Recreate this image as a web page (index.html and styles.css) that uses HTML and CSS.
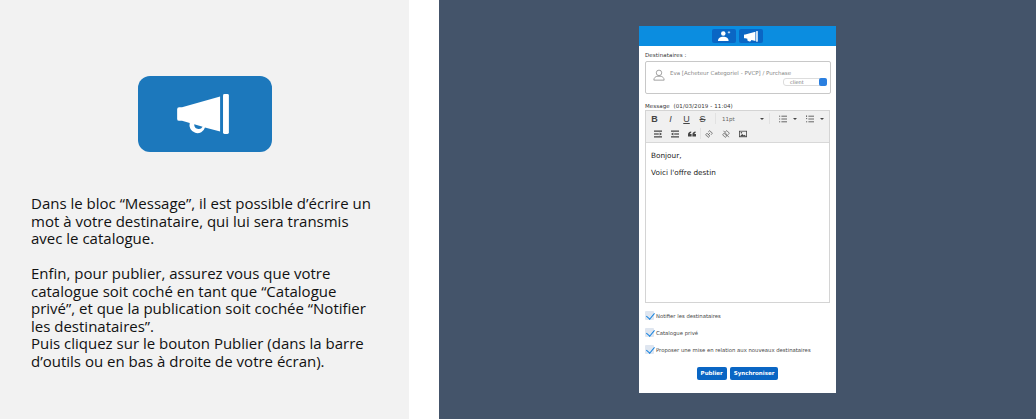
FILE: index.html
```html
<!DOCTYPE html>
<html lang="fr">
<head>
<meta charset="utf-8">
<title>Publier</title>
<link rel="stylesheet" href="styles.css">
</head>
<body>
<div class="slide">
  <section class="info">
    <div class="badge">
      <svg class="badge-icon" viewBox="0 0 54 42"><path d="M0 15.500a2 2 0 0 1 2-2h3L44 2.500v36L28.500 34.200a8 8 0 0 1-15.600-4.400L5 27.500H2a2 2 0 0 1-2-2z M17.500 31a4.600 4.600 0 0 0 8.600 2.500z" fill="#fff" fill-rule="evenodd"/><rect x="47" y="0" width="6" height="41" rx="1.500" fill="#fff"/></svg>
    </div>
    <div class="copy">
      <p>Dans le bloc “Message”, il est possible d’écrire un mot à votre destinataire, qui lui sera transmis avec le catalogue.</p>
      <p>Enfin, pour publier, assurez vous que votre catalogue soit coché en tant que “Catalogue privé”, et que la publication soit cochée “Notifier les destinataires”.<br>Puis cliquez sur le bouton Publier (dans la barre d’outils ou en bas à droite de votre écran).</p>
    </div>
  </section>
  <section class="stage">
    <div class="phone">
      <div class="tabs">
        <span class="tab"><svg class="tab-user" viewBox="0 0 16 12"><circle cx="6.500" cy="3" r="2.800" fill="#fff"/><path d="M0 12c0-3.500 3-5 6.500-5s6.500 1.500 6.500 5z" fill="#fff"/><path d="M13.500 0v3M12 1.500h3" stroke="#fff" stroke-width=".8"/></svg></span>
        <span class="tab"><svg class="tab-horn" viewBox="0 0 54 42"><path d="M0 15.500a2 2 0 0 1 2-2h3L44 2.500v36L28.500 34.200a8 8 0 0 1-15.600-4.400L5 27.500H2a2 2 0 0 1-2-2z" fill="#fff"/><rect x="47" y="0" width="6" height="41" rx="1.500" fill="#fff"/></svg></span>
      </div>
      <div class="form">
        <div class="label">Destinataires :</div>
        <div class="recipient">
          <svg class="avatar" viewBox="0 0 14 14"><circle cx="7" cy="4.500" r="3.200" fill="none" stroke="#888" stroke-width=".9"/><path d="M1 13c0-3 2-4 3.500-4.500h5C11 9 13 10 13 13z" fill="none" stroke="#888" stroke-width=".9"/></svg>
          <div class="recipient-name">Eva [Acheteur Categoriel - PVCP] / Purchase</div>
          <div class="select"><span class="select-text">client</span><span class="select-arrows"></span></div>
        </div>
        <div class="label label-msg">Message&nbsp; (01/03/2019 - 11:04)</div>
        <div class="editor">
          <div class="toolbar">
            <div class="tool-row">
              <span class="t b">B</span><span class="t i">I</span><span class="t u">U</span><span class="t s">S</span>
              <span class="sep"></span>
              <span class="size">11pt</span><span class="caret caret-size"></span>
              <span class="sep"></span>
              <svg class="ti" viewBox="0 0 10 10"><path d="M3 1.500h7M3 5h7M3 8.500h7M0 1.500h1.500M0 5h1.500M0 8.500h1.500" stroke="#444" stroke-width="1"/></svg><span class="caret"></span>
              <svg class="ti" viewBox="0 0 10 10"><path d="M3 1.500h7M3 5h7M3 8.500h7M.7 .5v2M0 4.500h1.500M0 8.500h1.500" stroke="#444" stroke-width="1"/></svg><span class="caret"></span>
            </div>
            <div class="tool-row tool-row-2">
              <svg class="ti" viewBox="0 0 10 10"><path d="M0 1.500h10M0 8.500h10" stroke="#444" stroke-width="1.500"/><path d="M0 5h6" stroke="#444" stroke-width="1.500"/><path d="M7 3l3 2-3 2z" fill="#444"/></svg>
              <svg class="ti" viewBox="0 0 10 10"><path d="M0 1.500h10M0 8.500h10" stroke="#444" stroke-width="1.500"/><path d="M4 5h6" stroke="#444" stroke-width="1.500"/><path d="M3 3L0 5l3 2z" fill="#444"/></svg>
              <svg class="ti" viewBox="0 0 10 10"><path d="M0 8V5.500C0 3.500 1.500 2.300 4 2v1.500C3 3.700 2.500 4.200 2.500 5H4.500v3zM5.500 8V5.500C5.500 3.500 7 2.300 9.500 2v1.500C8.500 3.700 8 4.200 8 5h2v3z" fill="#444"/></svg>
              <span class="sep sep-tight"></span>
              <svg class="ti" viewBox="0 0 10 10"><path d="M3.500 6.500l3-3M4 2.500L6 .8 9.200 4 7.500 6M.8 6 2.500 4 6 7.500 4 9.200z" fill="none" stroke="#555" stroke-width=".9"/></svg>
              <svg class="ti" viewBox="0 0 10 10"><path d="M4 2.500L6 .8 9.200 4 7.500 6M.8 6 2.500 4 6 7.500 4 9.200zM2 1l6.500 8" fill="none" stroke="#555" stroke-width=".9"/></svg>
              <svg class="ti" viewBox="0 0 10 10"><rect x=".5" y="1.500" width="9" height="7" fill="none" stroke="#444"/><path d="M1 8l3-3 2 2 1-1 2 2z" fill="#444"/><circle cx="3" cy="3.500" r="1" fill="#444"/></svg>
            </div>
          </div>
          <div class="editor-body">
            <p>Bonjour,</p>
            <p>Voici l'offre destin</p>
          </div>
        </div>
        <div class="checks">
          <label class="check"><span class="box"></span>Notifier les destinataires</label>
          <label class="check"><span class="box"></span>Catalogue privé</label>
          <label class="check"><span class="box"></span>Proposer une mise en relation aux nouveaux destinataires</label>
        </div>
        <div class="actions">
          <span class="btn">Publier</span>
          <span class="btn">Synchroniser</span>
        </div>
      </div>
    </div>
  </section>
</div>
</body>
</html>
```

FILE: styles.css
```css
* { box-sizing: border-box; }
html, body { margin: 0; padding: 0; background: #fff; }
body { width: 1036px; height: 419px; overflow: hidden; }
.slide { display: flex; height: 419px; gap: 30px; }

.info {
  width: 409px;
  background: #f2f2f2;
  padding: 76px 0 0 31px;
  display: flex;
  flex-direction: column;
}
.badge {
  width: 134px;
  height: 76px;
  margin-left: 107px;
  border-radius: 12px;
  background: #1c78bc;
  display: flex;
  align-items: center;
  justify-content: flex-start;
  padding-left: 39px;
}
.badge-icon { width: 53px; height: 41px; margin-top: 1px; }
.copy {
  margin-top: 43px;
  width: 345px;
  font: 15px/17.5px "Open Sans", sans-serif;
  color: #111;
}
.copy p { margin: 0 0 17.5px; }

.stage {
  flex: 1;
  background: #44546a;
  padding-top: 26px;
  padding-left: 200px;
}
.phone {
  width: 197px;
  height: 367px;
  background: #fff;
  display: flex;
  flex-direction: column;
  font-family: "DejaVu Sans", sans-serif;
}
.tabs {
  height: 20px;
  background: #0b8de0;
  display: flex;
  justify-content: center;
  align-items: center;
  gap: 3px;
}
.tab {
  width: 24px;
  height: 14px;
  border-radius: 2px;
  background: #0a66c4;
  display: flex;
  align-items: center;
  justify-content: center;
}
.tab-user { width: 13px; height: 10px; }
.tab-horn { width: 14px; height: 11px; }

.form { padding: 5px 6px 0; flex: 1; display: flex; flex-direction: column; }
.label { font-size: 5.500px; line-height: 8px; color: #333; letter-spacing: .1px; }
.recipient {
  margin-top: 2px;
  margin-right: -1px;
  height: 33px;
  border: 1px solid #c8c8c8;
  border-radius: 2px;
  position: relative;
  padding: 7px 0 0 7px;
  display: flex;
  align-items: flex-start;
  gap: 5px;
}
.avatar { width: 12px; height: 12px; }
.recipient-name { font-size: 5.500px; line-height: 8px; color: #888; white-space: nowrap; }
.select {
  position: absolute;
  right: 3px;
  top: 16px;
  width: 44px;
  height: 8px;
  border: 1px solid #ddd;
  border-radius: 3px;
  background: #fff;
}
.select-text { position: absolute; left: 6px; top: -1px; font-size: 5px; line-height: 8px; color: #777; }
.select-arrows { position: absolute; right: -1px; top: -1px; width: 8px; height: 8px; border-radius: 2px; background: #2a7fe0; }
.label-msg { margin-top: 8px; }

.editor {
  margin-top: 0;
  height: 193px;
  border: 1px solid #d4d4d4;
  display: flex;
  flex-direction: column;
}
.toolbar {
  height: 32px;
  background: #f0f0f0;
  border-bottom: 1px solid #d8d8d8;
  padding-left: 5px;
  display: flex;
  flex-direction: column;
}
.tool-row { height: 15px; display: flex; align-items: center; gap: 9px; }
.tool-row-2 { padding-left: 3px; }
.t { font: 9px/10px "Liberation Sans", sans-serif; color: #444; width: 7px; text-align: center; }
.b { font-weight: 700; }
.i { font-style: italic; }
.u { text-decoration: underline; }
.s { text-decoration: line-through; }
.sep { width: 1px; height: 11px; background: #e2e2e2; }
.sep-tight { margin: 0 -5px; }
.size { font-size: 5.500px; color: #666; width: 29px; margin-left: -3px; }
.caret { width: 0; height: 0; border: 2px solid transparent; border-top: 2.500px solid #444; border-bottom: 0; margin-left: -3px; }
.caret-size { margin-left: 0; margin-right: -4px; }
.ti { width: 8px; height: 8px; }
.editor-body { padding: 8px 5px; font-size: 7.300px; line-height: 9px; color: #222; flex: 1; }
.editor-body p { margin: 0 0 8px; }

.checks { margin-top: 8px; display: flex; flex-direction: column; gap: 8px; }
.check {
  display: flex;
  align-items: center;
  height: 9px;
  font-size: 5.300px;
  color: #444;
  white-space: nowrap;
}
.box {
  width: 9px;
  height: 9px;
  margin-right: 2px;
  border-radius: 1px;
  background: #dfe6f0;
  position: relative;
  flex: none;
}
.box::after {
  content: "";
  position: absolute;
  left: 3px;
  top: -.5px;
  width: 3.500px;
  height: 7px;
  border: solid #1583e0;
  border-width: 0 1.800px 1.800px 0;
  transform: rotate(40deg);
}
.actions { margin-top: 13px; display: flex; justify-content: center; gap: 3px; }
.btn {
  height: 13px;
  padding: 0 4px;
  border-radius: 2px;
  background: #0a66c4;
  color: #fff;
  font-size: 5.500px;
  font-weight: 700;
  line-height: 13px;
}
```
